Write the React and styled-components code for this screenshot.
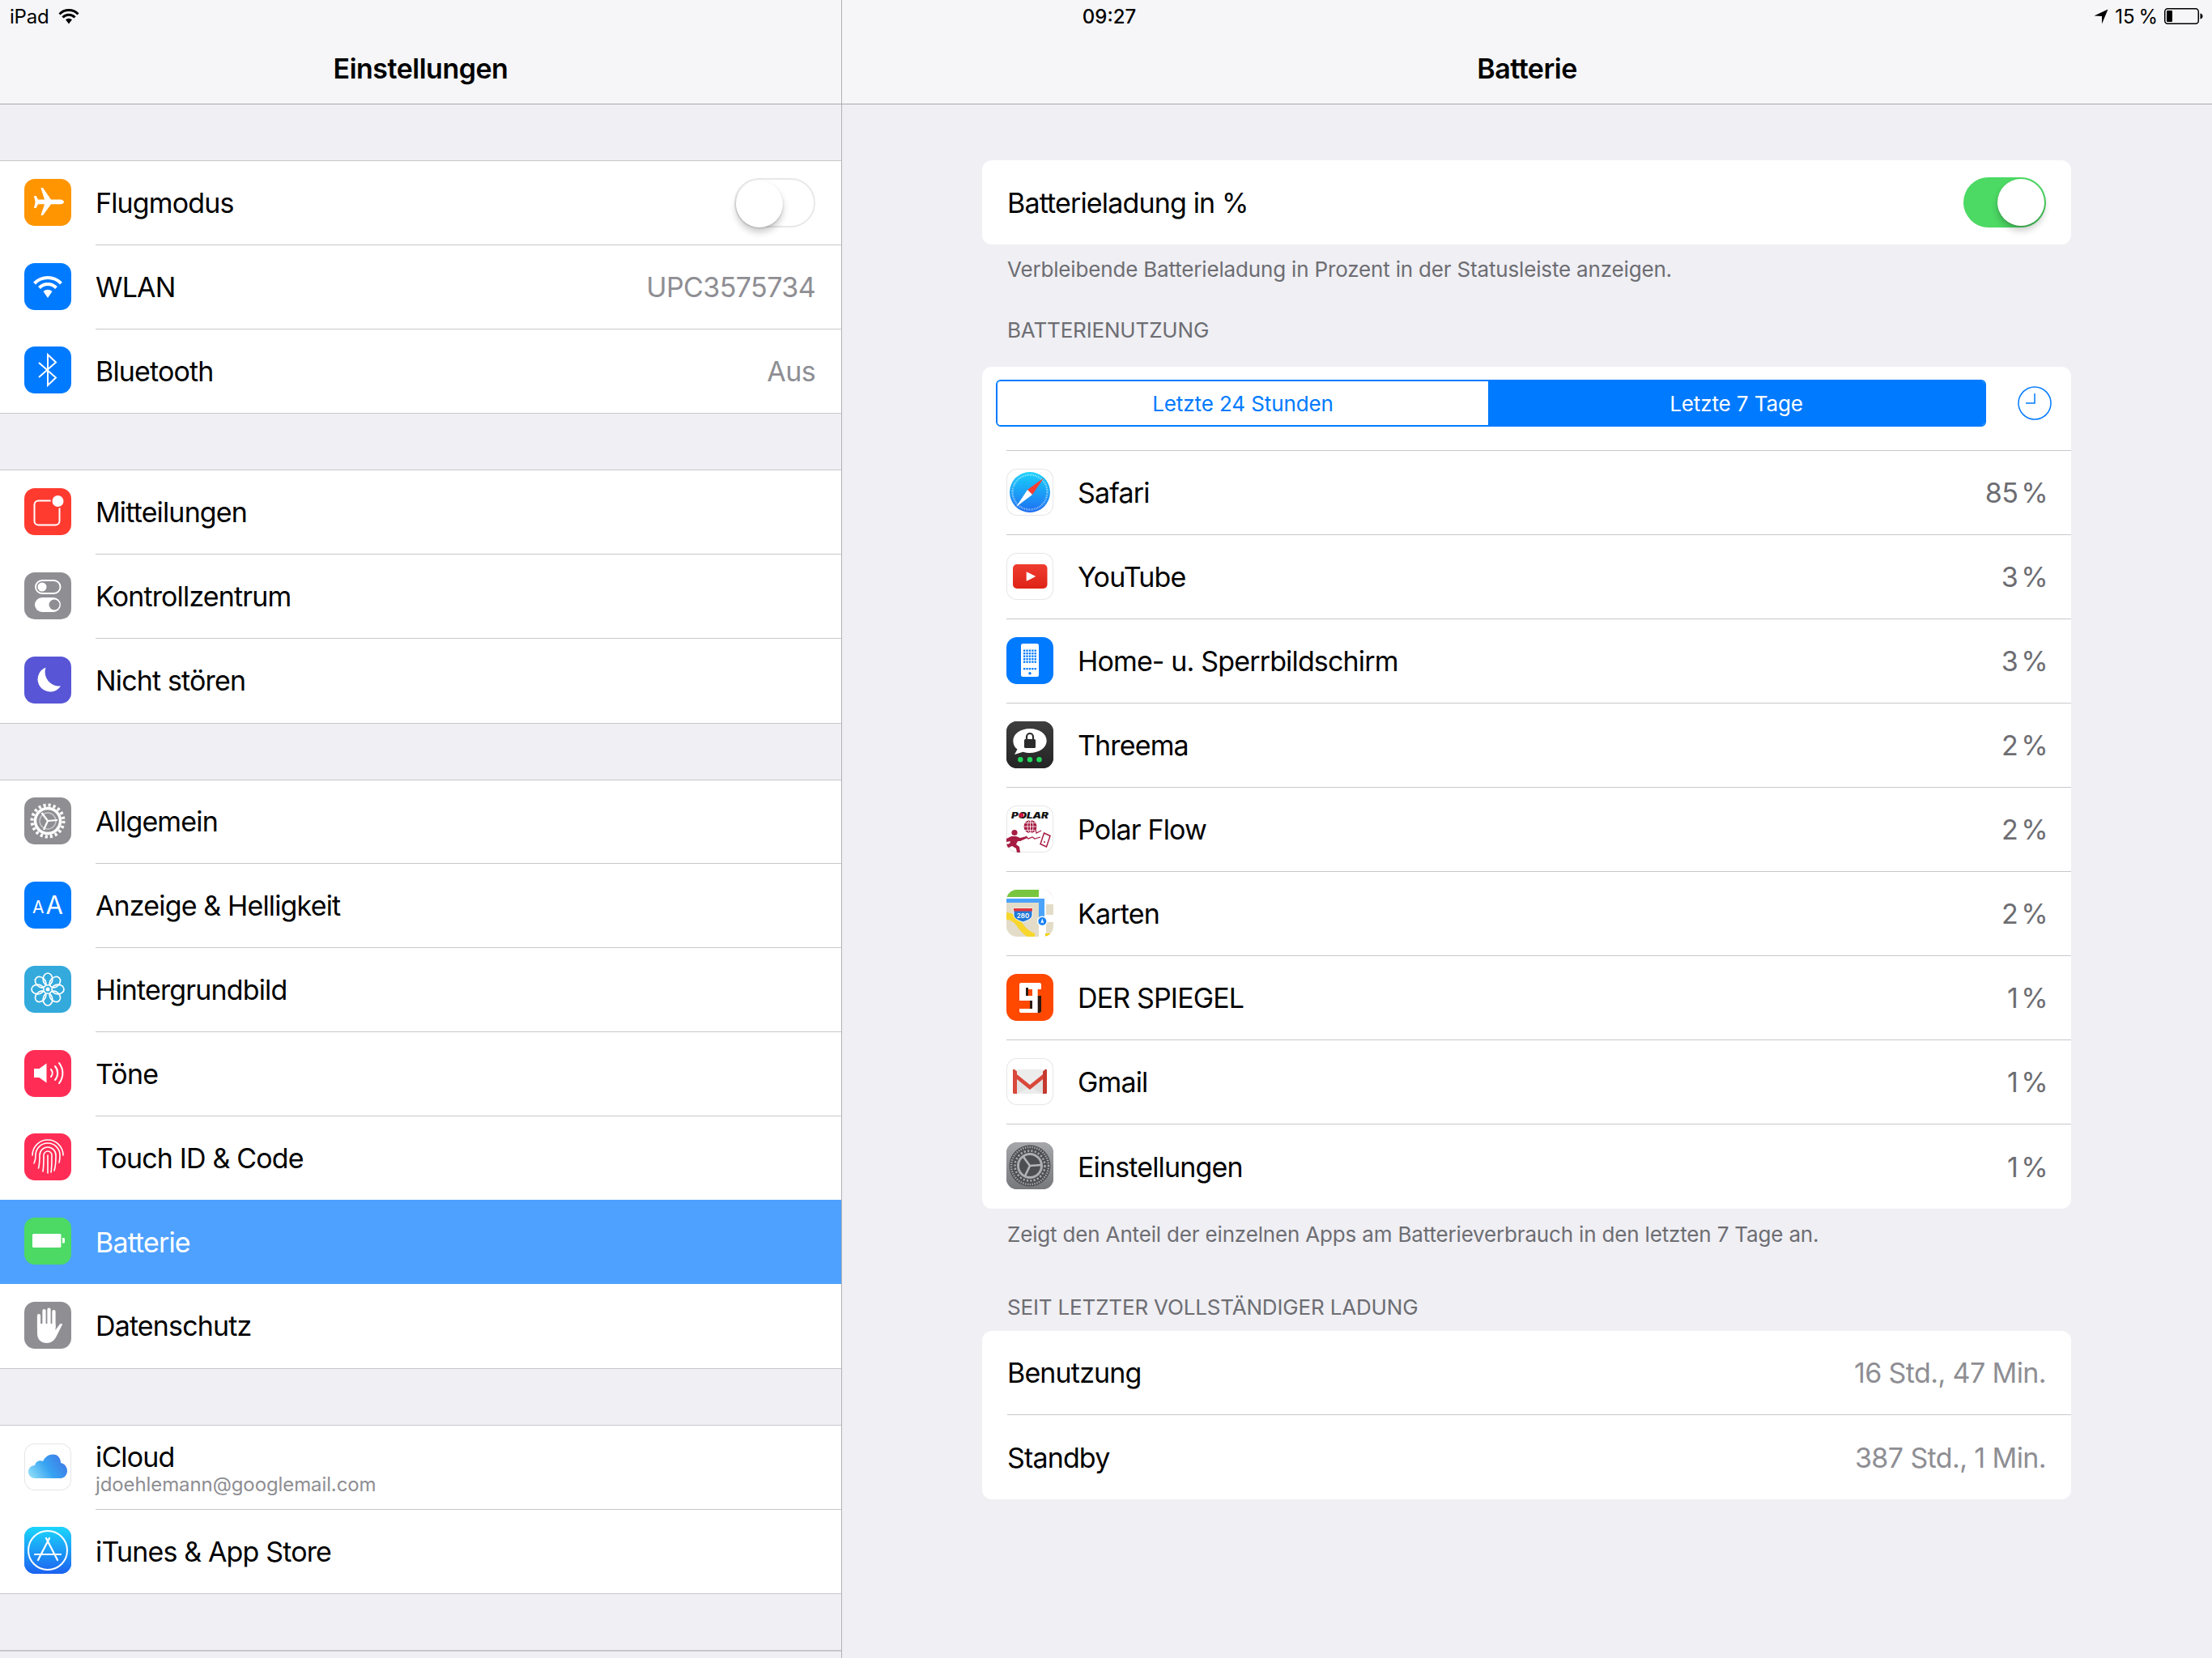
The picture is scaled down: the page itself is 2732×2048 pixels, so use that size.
import React from "react"
import styled, { createGlobalStyle } from "styled-components"

const GlobalStyle = createGlobalStyle`
  * { box-sizing: border-box; }
  html, body { margin: 0; padding: 0; background: #efeff4; }
  body {
    width: 2732px;
    height: 2048px;
    overflow: hidden;
    font-family: "Inter", "Roboto", "Liberation Sans", sans-serif;
    color: #000;
  }
`

const Screen = styled.div`
  display: flex;
  width: 2732px;
  height: 2048px;
  overflow: hidden;
`
const MasterPane = styled.div`
  width: 1040px;
  flex: none;
  height: 100%;
  border-right: 1px solid #b2b2b5;
`
const DetailPane = styled.div`
  flex: 1;
  height: 100%;
`
const NavBar = styled.div`
  height: 129px;
  background: #f6f6f8;
  border-bottom: 1px solid #a9a9ac;
`
const StatusLeft = styled.div`
  height: 40px;
  display: flex;
  align-items: center;
  gap: 11px;
  padding-left: 12px;
  font-size: 24px;
  letter-spacing: -0.2px;
`
const StatusGrid = styled.div`
  height: 40px;
  display: grid;
  grid-template-columns: 660px 1fr;
  align-items: center;
  font-size: 24px;
`
const Clock = styled.div`
  text-align: center;
  font-weight: 500;
`
const StatusRight = styled.div`
  display: flex;
  align-items: center;
  justify-content: flex-end;
  padding-right: 11px;
  gap: 8px;
  word-spacing: -2px;
`
const NavTitle = styled.div`
  height: 88px;
  display: flex;
  align-items: center;
  justify-content: center;
  font-size: 34px;
  font-weight: 600;
  letter-spacing: -0.5px;
`
const MasterList = styled.div`
  padding-top: 69px;
`
const Group = styled.div`
  background: #fff;
  border-top: 1px solid #c8c7cc;
  border-bottom: 1px solid #c8c7cc;
  margin-bottom: 69px;
`
const MasterRow = styled.div`
  height: 103.75px;
  display: flex;
  align-items: center;
  padding-left: 30px;
  background: ${(p) => (p.$selected ? "#4ea1ff" : "#fff")};
  color: ${(p) => (p.$selected ? "#fff" : "#000")};
`
const RowBody = styled.div`
  flex: 1;
  min-width: 0;
  height: 100%;
  margin-left: ${(p) => p.$indent}px;
  padding-right: ${(p) => p.$right}px;
  display: flex;
  align-items: center;
  justify-content: space-between;
  border-bottom: ${(p) => (p.$last ? "none" : "1px solid #c8c7cc")};
`
const Label = styled.div`
  font-size: 34px;
  letter-spacing: -0.85px;
  white-space: nowrap;
`
const Value = styled.div`
  font-size: 34px;
  letter-spacing: -0.6px;
  color: #8e8e93;
  white-space: nowrap;
`
const Percent = styled(Value)`
  color: #6d6d72;
  word-spacing: -5px;
  margin-right: -2px;
`
const Stack = styled.div`
  display: flex;
  flex-direction: column;
  padding-top: 5px;
`
const StackTitle = styled(Label)`
  line-height: 38px;
`
const Subtitle = styled.div`
  font-size: 24px;
  line-height: 30px;
  letter-spacing: -0.1px;
  color: #8e8e93;
`
const Tile = styled.svg`
  width: 58px;
  height: 58px;
  flex: none;
  display: block;
  margin-bottom: 2px;
  border-radius: 13px;
  overflow: hidden;
  background: ${(p) => p.$bg || "#fff"};
  box-shadow: ${(p) => (p.$bg ? "none" : "inset 0 0 0 1px #e6e6e9")};
`
const Track = styled.div`
  width: ${(p) => (p.$on ? 102 : 100)}px;
  height: ${(p) => (p.$on ? 62 : 61)}px;
  border-radius: 31px;
  padding: ${(p) => (p.$on ? "2px" : "2px 0")};
  display: flex;
  justify-content: ${(p) => (p.$on ? "flex-end" : "flex-start")};
  background: ${(p) => (p.$on ? "#4cd964" : "#fff")};
  border: ${(p) => (p.$on ? "none" : "2px solid #e8e8ea")};
`
const Knob = styled.div`
  width: 58px;
  height: 58px;
  flex: none;
  margin-top: ${(p) => (p.$on ? 0 : -1)}px;
  border-radius: 50%;
  background: #fff;
  box-shadow: 0 6px 8px rgba(0, 0, 0, 0.2), 0 1px 2px rgba(0, 0, 0, 0.18);
`
const DetailBody = styled.div`
  padding: 69px 174px 0 173px;
`
const Card = styled.div`
  background: #fff;
  border-radius: 12px;
  overflow: hidden;
`
const DetailRow = styled.div`
  height: 104px;
  display: flex;
  align-items: center;
  margin-left: ${(p) => p.$left}px;
  border-bottom: ${(p) => (p.$last ? "none" : "1px solid #c8c7cc")};
`
const Footnote = styled.div`
  font-size: 26px;
  line-height: 32px;
  letter-spacing: -0.17px;
  color: #6d6d72;
  padding-left: 31px;
  margin-top: ${(p) => p.$top}px;
`
const SectionHead = styled(Footnote)`
  margin-bottom: ${(p) => p.$bottom}px;
`
const SegmentRow = styled.div`
  height: 103px;
  display: flex;
  align-items: flex-start;
  padding: 16px 24px 0 17px;
  justify-content: space-between;
`
const Segments = styled.div`
  width: 1223px;
  height: 58px;
  display: flex;
  border: 2px solid #007aff;
  border-radius: 6px;
  overflow: hidden;
`
const Segment = styled.div`
  flex: ${(p) => p.$grow};
  display: flex;
  align-items: center;
  justify-content: center;
  font-size: 26px;
  letter-spacing: -0.1px;
  background: ${(p) => (p.$active ? "#007aff" : "#fff")};
  color: ${(p) => (p.$active ? "#fff" : "#007aff")};
`
const ClockIcon = styled.svg`
  width: 42px;
  height: 42px;
  margin-top: 8px;
  flex: none;
`
const RowRule = styled.div`
  height: 1px;
  margin-left: 30px;
  background: #c8c7cc;
`

const WifiGlyph = () => (
  <svg width="26" height="19" viewBox="0 0 26 19">
    <path d="M1.5 6.5a16 16 0 0 1 23 0M5.5 10.5a10.5 10.5 0 0 1 15 0" fill="none" stroke="#000" strokeWidth="3" />
    <path d="M9 13.3a6 6 0 0 1 8 0L13 18.5z" fill="#000" />
  </svg>
)
const ArrowGlyph = () => (
  <svg width="18" height="19" viewBox="0 0 18 19">
    <path d="M17.500 0.500L10 18.500V9L0.500 8.600z" fill="#000" />
  </svg>
)
const BatteryGlyph = () => (
  <svg width="48" height="20" viewBox="0 0 48 20">
    <rect x="0.75" y="0.75" width="41.5" height="18.5" rx="3.5" fill="none" stroke="#000" strokeWidth="1.5" />
    <rect x="3" y="3" width="7" height="14" rx="1" fill="#000" />
    <path d="M44.5 6.5c2 .3 3 1.7 3 3.5s-1 3.2-3 3.5z" fill="#000" />
  </svg>
)

const PlaneIcon = () => (
  <Tile $bg="#ff9500" viewBox="0 0 58 58">
    <path
      d="M49 28.5c0 1.6-2.200 2.800-4.200 2.800H33L23 45h-2.600l4.600-13.700h-8l-2.400 4.600H12l1.600-7.400L12 21h2.600l2.400 4.600h8L20.400 11H23l10 14.500h11.800c2 0 4.200 1.400 4.200 3z"
      fill="#fff"
    />
  </Tile>
)
const WifiIcon = () => (
  <Tile $bg="#007aff" viewBox="0 0 58 58">
    <g fill="none" stroke="#fff" strokeWidth="4">
      <path d="M12.500 25a23 23 0 0 1 33 0" />
      <path d="M18.500 30.500a14.500 14.500 0 0 1 21 0" />
    </g>
    <path d="M23.500 35a8 8 0 0 1 11 0L29 43z" fill="#fff" />
  </Tile>
)
const BluetoothIcon = () => (
  <Tile $bg="#007aff" viewBox="0 0 58 58">
    <path d="M18 20l21 18.500L29 48V10l10 9.500L18 38" fill="none" stroke="#fff" strokeWidth="2" />
  </Tile>
)
const NotifyIcon = () => (
  <Tile $bg="#ff3b30" viewBox="0 0 58 58">
    <rect x="12.500" y="15.500" width="31" height="30" rx="5" fill="none" stroke="#fff" strokeWidth="2" />
    <circle cx="41.500" cy="16" r="9" fill="#ff3b30" />
    <circle cx="41.500" cy="16" r="7" fill="#fff" />
  </Tile>
)
const ControlIcon = () => (
  <Tile $bg="#8e8e93" viewBox="0 0 58 58">
    <rect x="14" y="10" width="30.500" height="16" rx="8" fill="none" stroke="#fff" strokeWidth="2" />
    <circle cx="22" cy="18" r="5.500" fill="#fff" />
    <rect x="13" y="31" width="32" height="18" rx="9" fill="#fff" />
    <circle cx="37" cy="40" r="6.500" fill="#8e8e93" />
  </Tile>
)
const MoonIcon = () => (
  <Tile $bg="#5856d6" viewBox="0 0 58 58">
    <path d="M26.500 13.500A15.500 15.500 0 1 0 45 36.500 17.500 17.500 0 0 1 26.500 13.500z" fill="#fff" />
  </Tile>
)
const GearIcon = () => (
  <Tile $bg="#8e8e93" viewBox="0 0 58 58">
    <g fill="none" stroke="#fff">
      <circle cx="29" cy="29" r="19.500" strokeWidth="4" strokeDasharray="3.100 3.025" />
      <circle cx="29" cy="29" r="15.500" strokeWidth="3.500" />
      <circle cx="29" cy="29" r="10" strokeWidth="1.500" stroke="#c7c7cc" />
      <path d="M29 29l12-1M29 29L21.500 19M29 29l-5 11" strokeWidth="2.200" />
    </g>
  </Tile>
)
const AaIcon = () => (
  <Tile $bg="#007aff" viewBox="0 0 58 58">
    <g fill="#fff" fontFamily="Inter, sans-serif">
      <text x="10" y="39" fontSize="21">A</text>
      <text x="26.500" y="39.500" fontSize="31">A</text>
    </g>
  </Tile>
)
const FlowerIcon = () => (
  <Tile $bg="#34aadc" viewBox="0 0 58 58">
    <g fill="none" stroke="#fff" strokeWidth="1.700" transform="translate(29 29)">
      {[0, 45, 90, 135, 180, 225, 270, 315].map((a) => (
        <ellipse key={a} cx="0" cy="-12.500" rx="5.800" ry="7.500" transform={`rotate(${a})`} />
      ))}
      <circle r="2.500" fill="#fff" stroke="none" />
    </g>
  </Tile>
)
const SoundIcon = () => (
  <Tile $bg="#ff2d55" viewBox="0 0 58 58">
    <path d="M12 23h6.500l9-6.500v24l-9-6.500H12z" fill="#fff" />
    <g fill="none" stroke="#fff" strokeWidth="2" strokeLinecap="round">
      <path d="M33 24a7 7 0 0 1 0 9" />
      <path d="M38 20a13 13 0 0 1 0 17" />
      <path d="M43 16a20 20 0 0 1 0 25" />
    </g>
  </Tile>
)
const FingerIcon = () => (
  <Tile $bg="#ff2d55" viewBox="0 0 58 58">
    <g fill="none" stroke="#fff" strokeWidth="1.600" strokeLinecap="round">
      <path d="M10 27a19 19 0 0 1 38 0" />
      <path d="M12 37c1.500-3 2-6 2-10a15 15 0 0 1 30 0c0 3 0 6-1 9" />
      <path d="M17.500 43c1.500-5 1.500-10 1.500-16a10 10 0 0 1 20 0c0 7 0 13-2 19" />
      <path d="M23 47c1-6 1-13 1-20a5 5 0 0 1 10 0c0 8 0 15-1 21" />
      <path d="M29 27v22" />
    </g>
  </Tile>
)
const BatteryIcon = () => (
  <Tile $bg="#4cd964" viewBox="0 0 58 58">
    <rect x="10" y="20" width="35.500" height="17" rx="1.500" fill="#fff" />
    <path d="M47 25h1.500c1 0 1.500 .8 1.500 1.500v3.500c0 1-.5 1.500-1.500 1.500H47z" fill="#fff" />
  </Tile>
)
const HandIcon = () => (
  <Tile $bg="#8e8e93" viewBox="0 0 58 58">
    <g stroke="#fff" strokeWidth="4.200" strokeLinecap="round">
      <path d="M18 17v16" />
      <path d="M24.500 11v20" />
      <path d="M30.500 9.500v20" />
      <path d="M36.500 12v20" />
    </g>
    <path d="M16 27h22.500v8l5-7c1.500-1.500 3.500-1 3.500 0l-6 12c-3 7-7 11-13 11-7 0-12-4-12-12z" fill="#fff" />
  </Tile>
)
const CloudIcon = () => (
  <Tile viewBox="0 0 58 58">
    <defs>
      <linearGradient id="cloudFill" x1="0" y1="0.8" x2="1" y2="0.4">
        <stop offset="0" stopColor="#8ddcf7" />
        <stop offset="0.5" stopColor="#38a4f2" />
        <stop offset="1" stopColor="#3f7be6" />
      </linearGradient>
    </defs>
    <path
      d="M13 43c-5 0-8-4-8-8 0-5 4-8 8-8 1-5 6-7 10-5 3-7 10-10 16-8 4 2 6 6 6 10 5 1 8 5 8 10 0 5-4 9-8 9z"
      fill="url(#cloudFill)"
    />
  </Tile>
)
const StoreIcon = () => (
  <Tile $bg="#1d8cf5" viewBox="0 0 58 58">
    <defs>
      <linearGradient id="storeFill" x1="0" y1="0" x2="0" y2="1">
        <stop offset="0" stopColor="#1bd6fc" />
        <stop offset="1" stopColor="#1d62f0" />
      </linearGradient>
    </defs>
    <rect width="58" height="58" fill="url(#storeFill)" />
    <circle cx="29" cy="29" r="24" fill="none" stroke="#fff" strokeWidth="2" />
    <g stroke="#fff" strokeWidth="2.200" strokeLinecap="round">
      <path d="M31 14L17 41" />
      <path d="M27 14l14 27" />
      <path d="M13 34h32" />
    </g>
  </Tile>
)
const SafariIcon = () => (
  <Tile viewBox="0 0 58 58">
    <defs>
      <linearGradient id="safariFill" x1="0" y1="0" x2="0" y2="1">
        <stop offset="0" stopColor="#19d1fb" />
        <stop offset="1" stopColor="#1e6ef2" />
      </linearGradient>
    </defs>
    <circle cx="29" cy="29" r="25" fill="url(#safariFill)" />
    <circle cx="29" cy="29" r="21.500" fill="none" stroke="#fff" strokeOpacity="0.75" strokeWidth="2.500" strokeDasharray="0.700 1.400" />
    <path d="M46 11.500L26 26l6 6z" fill="#ff3b30" />
    <path d="M12 47l14-21 6 6z" fill="#fff" />
  </Tile>
)
const YoutubeIcon = () => (
  <Tile viewBox="0 0 58 58">
    <defs>
      <linearGradient id="tubeFill" x1="0" y1="0" x2="0" y2="1">
        <stop offset="0" stopColor="#ee3d2f" />
        <stop offset="1" stopColor="#de2317" />
      </linearGradient>
    </defs>
    <rect x="8" y="14" width="42.500" height="30" rx="5" fill="url(#tubeFill)" />
    <path d="M24.700 23.200L36.300 29l-11.600 5.800z" fill="#fff" />
  </Tile>
)
const HomeIcon = () => (
  <Tile $bg="#007aff" viewBox="0 0 58 58">
    <rect x="18" y="8" width="22" height="41" rx="2.500" fill="#fff" />
    <g fill="#007aff">
      {[0, 1, 2, 3, 4].flatMap((r) =>
        [0, 1, 2, 3, 4].map((c) => <rect key={`${r}-${c}`} x={21 + c * 3.400} y={15.500 + r * 3.500} width="2.300" height="2.300" />)
      )}
      {[0, 1, 2, 3, 4].map((c) => (
        <rect key={c} x={21 + c * 3.400} y="38" width="2.300" height="2.300" />
      ))}
      <circle cx="29" cy="44.800" r="1.700" />
    </g>
  </Tile>
)
const ThreemaIcon = () => (
  <Tile $bg="#2b2b2b" viewBox="0 0 58 58">
    <defs>
      <linearGradient id="threemaFill" x1="0" y1="0" x2="0" y2="1">
        <stop offset="0" stopColor="#3e3e3e" />
        <stop offset="1" stopColor="#242424" />
      </linearGradient>
    </defs>
    <rect width="58" height="58" fill="url(#threemaFill)" />
    <path d="M29 9c11.500 0 20.700 6.500 20.700 15S40.500 39 29 39c-3 0-6-.4-8.500-1.300L10 41l3.500-6.500C10 32 8.300 28.300 8.300 24 8.300 15.500 17.500 9 29 9z" fill="#fff" />
    <rect x="22" y="22" width="14" height="11" rx="1.500" fill="#2b2b2b" />
    <path d="M25 22v-3a4 4 0 0 1 8 0v3" fill="none" stroke="#2b2b2b" strokeWidth="2.200" />
    <g fill="#22d85a">
      <circle cx="17.300" cy="47.300" r="3.200" />
      <circle cx="29" cy="47.300" r="3.200" />
      <circle cx="40.500" cy="47.300" r="3.200" />
    </g>
  </Tile>
)
const PolarIcon = () => (
  <Tile viewBox="0 0 58 58">
    <text x="6" y="15.500" textLength="46" lengthAdjust="spacingAndGlyphs" fontFamily="Inter, sans-serif" fontSize="10" fontWeight="900" fontStyle="italic" fill="#111">POLAR</text>
    <circle cx="18.500" cy="12" r="2.800" fill="#d4134a" />
    <circle cx="29.500" cy="26" r="8" fill="#a61c42" />
    <g fill="none" stroke="#fff" strokeWidth="0.800">
      <path d="M21.500 26h16M29.500 18v16M23 21.500h13M23 30.500h13" />
      <ellipse cx="29.500" cy="26" rx="3.500" ry="8" />
    </g>
    <g fill="none" stroke="#a61c42">
      <path d="M36 29l1 5 6-3" strokeWidth="1.200" />
      <path d="M24 38l3 3 5-2 3 2 7-2" strokeWidth="1.300" />
      <path d="M46.500 34l7.500 3.500-4.500 13.500-7.500-3.500z" strokeWidth="1.500" />
    </g>
    <circle cx="47" cy="45" r="1" fill="#a61c42" />
    <g fill="#a61c42">
      <circle cx="10" cy="33.500" r="3.600" />
      <path d="M0 41l6-3h6l5 2 8-2 1 2-9 4-3 0-2 4 4 3 1 7h-4l-1-5-5-3-4 2-3-1v-3l4-1 1-3-5 1z" />
    </g>
  </Tile>
)
const MapsIcon = () => (
  <Tile $bg="#e3dcc8" viewBox="0 0 58 58">
    <rect width="40" height="9" fill="#78c63f" />
    <rect x="48" width="10" height="9" fill="#fff" />
    <path d="M50 0h8v8z" fill="#f4c4cc" />
    <rect x="40" width="9" height="58" fill="#fff" />
    <rect x="49" y="9" width="9" height="9" fill="#fff" />
    <rect x="49" y="31" width="9" height="9" fill="#fff" />
    <rect y="9" width="40" height="2" fill="#fff" />
    <rect x="48" y="54" width="10" height="4" fill="#f6d000" />
    <path d="M0 28c8 1 14 5 19 12 4 7 9 11 16 14v4H26c-4-2-9-7-13-13-3-5-8-8-13-8z" fill="#f8d62c" />
    <path d="M0 11h47v28h-7V16H0z" fill="#4ba3fb" />
    <path d="M9 23h23v8c0 5-6 7-11.500 9C15 38 9 36 9 31z" fill="#1f78d8" stroke="#fff" strokeWidth="1" />
    <rect x="9" y="23" width="23" height="3.500" fill="#e2383f" />
    <text x="20.500" y="35" textAnchor="middle" fontFamily="Inter, sans-serif" fontSize="8" fontWeight="600" fill="#fff">280</text>
    <circle cx="44.300" cy="39" r="6.500" fill="#fff" />
    <circle cx="44.300" cy="39" r="5" fill="#1a82f5" />
    <path d="M44.300 35.500l2 6-2-1-2 1z" fill="#fff" />
  </Tile>
)
const SpiegelIcon = () => (
  <Tile $bg="#ff4800" viewBox="0 0 58 58">
    <rect x="16" y="11" width="27" height="37" rx="2" fill="#fff" />
    <rect x="24" y="17" width="3" height="10" fill="#2b1a10" />
    <rect x="27" y="17" width="16" height="3.500" fill="#fff" />
    <rect x="27" y="19" width="5" height="8" fill="#ff4800" />
    <rect x="38.700" y="19" width="4.300" height="8" fill="#ff4800" />
    <rect x="16" y="33" width="13" height="10" fill="#ff4800" />
    <rect x="29" y="33" width="3" height="10" fill="#2b1a10" />
    <path d="M38.700 27H43v19c0 1.200-.8 2-2 2h-2.300z" fill="#2b1a10" />
  </Tile>
)
const GmailIcon = () => (
  <Tile viewBox="0 0 58 58">
    <rect x="8" y="14" width="42" height="30" rx="1.500" fill="#ececec" />
    <path d="M13 44V22l16 14-16 8zM45 44V22L29 36l16 8z" fill="#e2e2e2" />
    <path d="M8 16l21 17 21-17v6L29 39 8 22z" fill="#d9483b" />
    <path d="M8 15c0-1 1-1.500 2-1l3 2.500V44H9.500C8.500 44 8 43.400 8 42.500z" fill="#d9483b" />
    <path d="M50 15c0-1-1-1.500-2-1l-3 2.500V44h3.500c1 0 1.500-.6 1.500-1.500z" fill="#c5392e" />
  </Tile>
)
const SettingsIcon = () => (
  <Tile $bg="#8e8f93" viewBox="0 0 58 58">
    <defs>
      <linearGradient id="settingsFill" x1="0" y1="0" x2="0" y2="1">
        <stop offset="0" stopColor="#a6a7ab" />
        <stop offset="1" stopColor="#77787c" />
      </linearGradient>
    </defs>
    <rect width="58" height="58" fill="url(#settingsFill)" />
    <circle cx="29" cy="29" r="25.500" fill="#4d4e51" />
    <circle cx="29" cy="29" r="23" fill="none" stroke="#a8a9ac" strokeWidth="2.500" strokeDasharray="1.400 1.500" />
    <circle cx="29" cy="29" r="18.500" fill="none" stroke="#a8a9ac" strokeWidth="2.500" strokeDasharray="2.200 2.200" />
    <circle cx="29" cy="29" r="14.500" fill="none" stroke="#adaeb1" strokeWidth="3" />
    <path d="M29 29L21 18M29 29l13.500-1M29 29l-6 12.500" stroke="#b4b5b8" strokeWidth="2.600" fill="none" />
  </Tile>
)

const masterGroups = [
  [
    { Icon: PlaneIcon, label: "Flugmodus", toggle: true },
    { Icon: WifiIcon, label: "WLAN", value: "UPC3575734" },
    { Icon: BluetoothIcon, label: "Bluetooth", value: "Aus" },
  ],
  [
    { Icon: NotifyIcon, label: "Mitteilungen" },
    { Icon: ControlIcon, label: "Kontrollzentrum" },
    { Icon: MoonIcon, label: "Nicht stören" },
  ],
  [
    { Icon: GearIcon, label: "Allgemein" },
    { Icon: AaIcon, label: "Anzeige & Helligkeit" },
    { Icon: FlowerIcon, label: "Hintergrundbild" },
    { Icon: SoundIcon, label: "Töne" },
    { Icon: FingerIcon, label: "Touch ID & Code" },
    { Icon: BatteryIcon, label: "Batterie", selected: true },
    { Icon: HandIcon, label: "Datenschutz" },
  ],
  [
    { Icon: CloudIcon, label: "iCloud", sub: "jdoehlemann@googlemail.com" },
    { Icon: StoreIcon, label: "iTunes & App Store" },
  ],
]

const usage = [
  { Icon: SafariIcon, label: "Safari", value: "85 %" },
  { Icon: YoutubeIcon, label: "YouTube", value: "3 %" },
  { Icon: HomeIcon, label: "Home- u. Sperrbildschirm", value: "3 %" },
  { Icon: ThreemaIcon, label: "Threema", value: "2 %" },
  { Icon: PolarIcon, label: "Polar Flow", value: "2 %" },
  { Icon: MapsIcon, label: "Karten", value: "2 %" },
  { Icon: SpiegelIcon, label: "DER SPIEGEL", value: "1 %" },
  { Icon: GmailIcon, label: "Gmail", value: "1 %" },
  { Icon: SettingsIcon, label: "Einstellungen", value: "1 %" },
]

function App() {
  return (
    <Screen>
      <GlobalStyle />
      <MasterPane>
        <NavBar>
          <StatusLeft>
            iPad <WifiGlyph />
          </StatusLeft>
          <NavTitle>Einstellungen</NavTitle>
        </NavBar>
        <MasterList>
          {masterGroups.map((rows, g) => (
            <Group key={g}>
              {rows.map((row, i) => (
                <MasterRow key={row.label} $selected={row.selected}>
                  <row.Icon />
                  <RowBody $indent={30} $right={32} $last={i === rows.length - 1 || row.selected || rows[i + 1].selected}>
                    {row.sub ? (
                      <Stack>
                        <StackTitle>{row.label}</StackTitle>
                        <Subtitle>{row.sub}</Subtitle>
                      </Stack>
                    ) : (
                      <Label>{row.label}</Label>
                    )}
                    {row.value && <Value>{row.value}</Value>}
                    {row.toggle && (
                      <Track>
                        <Knob />
                      </Track>
                    )}
                  </RowBody>
                </MasterRow>
              ))}
            </Group>
          ))}
          <Group />
        </MasterList>
      </MasterPane>

      <DetailPane>
        <NavBar>
          <StatusGrid>
            <Clock>09:27</Clock>
            <StatusRight>
              <ArrowGlyph />
              <span>15 %</span>
              <BatteryGlyph />
            </StatusRight>
          </StatusGrid>
          <NavTitle>Batterie</NavTitle>
        </NavBar>
        <DetailBody>
          <Card>
            <DetailRow $left={31} $last>
              <RowBody $indent={0} $right={31} $last>
                <Label>Batterieladung in %</Label>
                <Track $on>
                  <Knob $on />
                </Track>
              </RowBody>
            </DetailRow>
          </Card>
          <Footnote $top={15}>Verbleibende Batterieladung in Prozent in der Statusleiste anzeigen.</Footnote>
          <SectionHead $top={43} $bottom={29}>BATTERIENUTZUNG</SectionHead>

          <Card>
            <SegmentRow>
              <Segments>
                <Segment $grow={608}>Letzte 24 Stunden</Segment>
                <Segment $grow={615} $active>Letzte 7 Tage</Segment>
              </Segments>
              <ClockIcon viewBox="0 0 42 42">
                <circle cx="21" cy="21" r="20" fill="none" stroke="#007aff" strokeWidth="1.500" />
                <path d="M21 9v12H10" fill="none" stroke="#007aff" strokeWidth="1.500" />
              </ClockIcon>
            </SegmentRow>
            <RowRule />
            {usage.map((row, i) => (
              <DetailRow key={row.label} $left={30} $last={i === usage.length - 1}>
                <row.Icon />
                <RowBody $indent={30} $right={31} $last>
                  <Label>{row.label}</Label>
                  <Percent>{row.value}</Percent>
                </RowBody>
              </DetailRow>
            ))}
          </Card>
          <Footnote $top={16}>Zeigt den Anteil der einzelnen Apps am Batterieverbrauch in den letzten 7 Tage an.</Footnote>
          <SectionHead $top={58} $bottom={13}>SEIT LETZTER VOLLSTÄNDIGER LADUNG</SectionHead>

          <Card>
            <DetailRow $left={31}>
              <RowBody $indent={0} $right={31} $last>
                <Label>Benutzung</Label>
                <Value>16 Std., 47 Min.</Value>
              </RowBody>
            </DetailRow>
            <DetailRow $left={31} $last>
              <RowBody $indent={0} $right={31} $last>
                <Label>Standby</Label>
                <Value>387 Std., 1 Min.</Value>
              </RowBody>
            </DetailRow>
          </Card>
        </DetailBody>
      </DetailPane>
    </Screen>
  )
}

export default App
